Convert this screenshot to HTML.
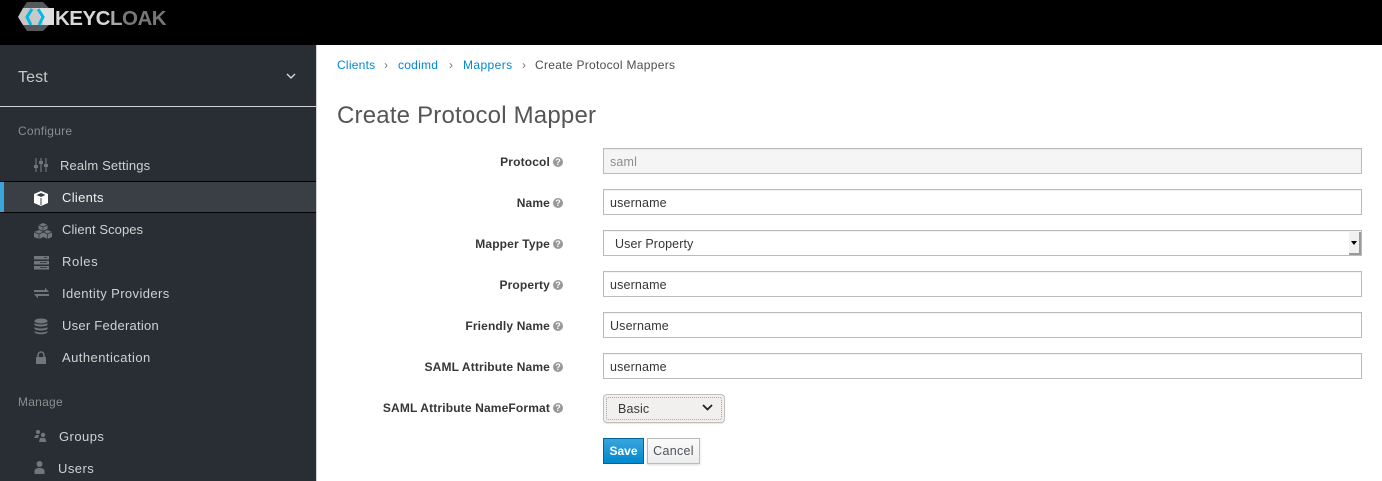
<!DOCTYPE html>
<html><head><meta charset="utf-8"><style>
html,body{margin:0;padding:0;width:1382px;height:481px;overflow:hidden;background:#fff;font-family:"Liberation Sans",sans-serif;}
.a{position:absolute;white-space:nowrap}
.nav{font-size:13px;color:#d1d1d1;line-height:16px}
.lab{font-size:12px;font-weight:bold;color:#363636;right:832px;line-height:16px;text-align:right;letter-spacing:.15px}
.q{position:absolute;left:553px;width:10px;height:10px;border-radius:50%;background:#96989a;color:#fff;font-size:9px;font-weight:bold;line-height:10px;text-align:center}
.inp{position:absolute;left:603px;width:757px;height:24px;border:1px solid #bbb;background:#fff;font-size:12.5px;color:#363636;line-height:26px;text-indent:6px;letter-spacing:.15px;box-shadow:inset 0 1px 1px rgba(3,3,3,.05)}
.bc{font-size:12px;line-height:16px;letter-spacing:.25px}
svg{position:absolute;overflow:visible}
</style></head><body>
<div class="a" style="left:0;top:0;width:1382px;height:45px;background:#000"></div>
<svg style="left:0;top:0" width="60" height="45" viewBox="0 0 60 45">
<polygon points="27,2 43,2 49,8 49,25 43,31 27,31 23,25 23,8" fill="#55595c"/>
<polygon points="18,17 23,8 54,8 54,25 23,25" fill="#c8c8c8"/>
<polygon points="36,8 54,8 54,25 44,25" fill="#dedede"/>
<path d="M32 9 L27 17 L31 25" fill="none" stroke="#00b9e4" stroke-width="3"/>
<path d="M38 9 L43 17 L39 25" fill="none" stroke="#00b9e4" stroke-width="3"/>
</svg>
<div class="a" style="left:55px;top:7px;font-size:20.5px;font-weight:bold;line-height:24px;letter-spacing:-.5px;color:#777"><span style="color:#d8d8d8">KEYC</span><span style="color:#a8a8a8">L</span>OAK</div>

<div class="a" style="left:0;top:45px;width:316px;height:436px;background:#292e34;border-right:1px solid #d1d1d1"></div>
<div class="a" style="left:18px;top:68px;font-size:16px;line-height:20px;color:#c8c8c8;letter-spacing:.1px">Test</div>
<svg style="left:286px;top:73px" width="10" height="6"><path d="M1 1 L5 5 L9 1" fill="none" stroke="#e0e0e0" stroke-width="1.3"/></svg>
<div class="a" style="left:0;top:106px;width:316px;height:1px;background:#d1d1d1"></div>
<div class="a" style="left:18px;top:123px;font-size:12px;line-height:16px;color:#8b8d8f;letter-spacing:.25px">Configure</div>
<div class="a" style="left:0;top:181px;width:316px;height:32px;background:#393f44;border-top:1px solid #030303;border-bottom:1px solid #030303;box-sizing:border-box"></div>
<div class="a" style="left:0;top:182px;width:4px;height:30px;background:#39a5dc"></div>
<div class="a nav" style="left:60px;top:158px;letter-spacing:.15px">Realm Settings</div>
<div class="a nav" style="left:62px;top:190px;color:#f0f0f0;letter-spacing:.3px">Clients</div>
<div class="a nav" style="left:62px;top:222px;letter-spacing:.07px">Client Scopes</div>
<div class="a nav" style="left:62px;top:254px;letter-spacing:.6px">Roles</div>
<div class="a nav" style="left:62px;top:286px;letter-spacing:.4px">Identity Providers</div>
<div class="a nav" style="left:62px;top:318px;letter-spacing:.25px">User Federation</div>
<div class="a nav" style="left:62px;top:350px;letter-spacing:.45px">Authentication</div>
<div class="a" style="left:18px;top:394px;font-size:12px;line-height:16px;color:#8b8d8f;letter-spacing:.25px">Manage</div>
<div class="a nav" style="left:59px;top:429px;letter-spacing:.45px">Groups</div>
<div class="a nav" style="left:58px;top:461px;letter-spacing:.45px">Users</div>

<svg style="left:0;top:0" width="60" height="481" viewBox="0 0 60 481" fill="#72767b">
<path d="M36 158v14M41 158v14M46 158v14" stroke="#72767b" stroke-width="1.2"/>
<rect x="34" y="165" width="4" height="3"/><rect x="39" y="161" width="4" height="3"/><rect x="44" y="164" width="4" height="3"/>
<path d="M41 191 L48 194 L48 203 L41 206 L34 203 L34 194Z" fill="#fff"/><path d="M36.500 195 L41 197 L45.500 195 L41 193Z" fill="#393f44"/><path d="M41 198V205" stroke="#393f44"/>
<path d="M43 223l4.500 2v4l-4.500 2-4.500-2v-4z"/><path d="M39 230l4.500 2v5l-4.500 2-5-2v-5z"/><path d="M47.500 230l4.500 2v5l-4.500 2-4-2v-5z"/>
<path d="M38.500 225l4.500 2 4.500-2M43 227v4M34 232l5 2 4.500-2M39 234v5M43.500 232l4 2 4.500-2M47.500 234v5" fill="none" stroke="#292e34" stroke-width=".7"/>
<rect x="34" y="256" width="15" height="3.500"/><rect x="34" y="261" width="15" height="3.500"/><rect x="34" y="266" width="15" height="3.500"/>
<path d="M40 262.500h7M40 267.500h7M44 257.500h3" stroke="#292e34" stroke-width=".8"/>
<path d="M34 290h11v-2.500l4 4.500h-15zM34 294h15v2h-11v2.500l-4-4.500z"/>
<ellipse cx="41" cy="321" rx="6.500" ry="2.500"/><path d="M34.500 323c2 2 11 2 13 0v2c-2 2-11 2-13 0zM34.500 327c2 2 11 2 13 0v2c-2 2-11 2-13 0zM34.500 331c2 2 11 2 13 0v1c-1 3-12 3-13 0z"/>
<path d="M36 357h10v7h-10z"/><path d="M38 357v-2a3 3 0 0 1 6 0v2" fill="none" stroke="#72767b" stroke-width="1.500"/>
<circle cx="38" cy="432" r="2"/><path d="M34 438l2-3h3l-1 3z"/><circle cx="43" cy="435" r="2.200"/><path d="M39 442l1-4h5l1.500 4z"/>
<circle cx="39.500" cy="464" r="3"/><path d="M34.500 474v-3c0-2 2-3 5-3s5 1 5 3v3z"/>
</svg>

<div class="a bc" style="left:337px;top:57px;color:#0088ce">Clients</div>
<div class="a bc" style="left:384px;top:57px;color:#72767b">›</div>
<div class="a bc" style="left:398px;top:57px;color:#0088ce">codimd</div>
<div class="a bc" style="left:449px;top:57px;color:#72767b">›</div>
<div class="a bc" style="left:463px;top:57px;color:#0088ce;letter-spacing:.4px">Mappers</div>
<div class="a bc" style="left:522px;top:57px;color:#72767b">›</div>
<div class="a bc" style="left:535px;top:57px;color:#4d4d4d;letter-spacing:.3px">Create Protocol Mappers</div>
<div class="a" style="left:337px;top:101px;font-size:24px;line-height:30px;color:#555;letter-spacing:.2px">Create Protocol Mapper</div>

<div class="a lab" style="top:154px">Protocol</div><div class="q" style="top:157px">?</div>
<div class="inp" style="top:148px;background:#f5f5f5;color:#8b8d8f">saml</div>
<div class="a lab" style="top:195px">Name</div><div class="q" style="top:198px">?</div>
<div class="inp" style="top:189px">username</div>
<div class="a lab" style="top:236px">Mapper Type</div><div class="q" style="top:239px">?</div>
<div class="inp" style="top:230px;text-indent:11px;letter-spacing:.1px">User Property</div>
<div class="a" style="left:1349px;top:232px;width:12px;height:23px;background:#f0f0f0;border-right:2px solid #9a9a9a;border-bottom:2px solid #9a9a9a;box-sizing:border-box"></div>
<svg style="left:1351px;top:241px" width="7" height="4"><path d="M0 0h6l-3 4z" fill="#000"/></svg>
<div class="a lab" style="top:277px">Property</div><div class="q" style="top:280px">?</div>
<div class="inp" style="top:271px">username</div>
<div class="a lab" style="top:318px">Friendly Name</div><div class="q" style="top:321px">?</div>
<div class="inp" style="top:312px">Username</div>
<div class="a lab" style="top:359px">SAML Attribute Name</div><div class="q" style="top:362px">?</div>
<div class="inp" style="top:353px">username</div>
<div class="a lab" style="top:400px">SAML Attribute NameFormat</div><div class="q" style="top:403px">?</div>

<div class="a" style="left:603px;top:394px;width:122px;height:29px;box-sizing:border-box;border:1px solid #c4c0b8;border-radius:4px;background:#f1f0ee;box-shadow:0 1px 1px rgba(3,3,3,.1)"></div>
<div class="a" style="left:606px;top:397px;width:116px;height:23px;box-sizing:border-box;border:1px dotted #a8a8a8;border-radius:2px"></div>
<div class="a" style="left:618px;top:401px;font-size:12.5px;line-height:16px;color:#363636;letter-spacing:.15px">Basic</div>
<svg style="left:702px;top:404px" width="11" height="7"><path d="M1 1 L5.500 5.500 L10 1" fill="none" stroke="#222" stroke-width="1.800"/></svg>

<div class="a" style="left:603px;top:438px;width:41px;height:26px;box-sizing:border-box;border:1px solid #00659c;background:linear-gradient(#39a5dc,#0088ce);color:#fff;font-size:12px;font-weight:bold;line-height:25px;text-align:center">Save</div>
<div class="a" style="left:647px;top:438px;width:53px;height:26px;box-sizing:border-box;border:1px solid #bbb;background:linear-gradient(#fafafa,#ededed);color:#4d5258;font-size:12.5px;line-height:25px;letter-spacing:.3px;text-align:center;box-shadow:0 1px 2px rgba(3,3,3,.15)">Cancel</div>
</body></html>
